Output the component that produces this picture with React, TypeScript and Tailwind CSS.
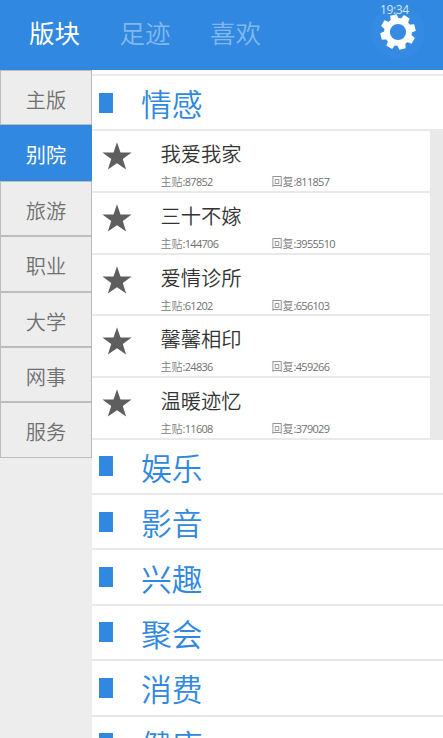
import { useState } from "react";
import clsx from "clsx";

const TABS = ["版块", "足迹", "喜欢"];

const CATEGORIES = ["主版", "别院", "旅游", "职业", "大学", "网事", "服务"];

const BOARDS = [
  { name: "我爱我家", posts: 87852, replies: 811857 },
  { name: "三十不嫁", posts: 144706, replies: 3955510 },
  { name: "爱情诊所", posts: 61202, replies: 656103 },
  { name: "馨馨相印", posts: 24836, replies: 459266 },
  { name: "温暖迹忆", posts: 11608, replies: 379029 },
];

const SECTIONS = ["情感", "娱乐", "影音", "兴趣", "聚会", "消费", "健康"];

const TEETH = [-15, 30, 75, 120, 165, 210, 255, 300];

function GearIcon() {
  return (
    <svg viewBox="-18 -18 36 36" className="w-9 h-9">
      <circle r="11" fill="none" stroke="white" strokeWidth="5.8" />
      {TEETH.map((angle) => (
        <path key={angle} d="M-4.2 -12 L-3.3 -17.6 H3.3 L4.2 -12 Z" fill="white" transform={`rotate(${angle})`} />
      ))}
    </svg>
  );
}

function StarIcon() {
  return (
    <svg viewBox="0 0 30 28" className="w-[30px] h-7 mt-px shrink-0">
      <path
        d="M15 0.3 L18.5 10.6 H29.6 L20.8 17 L24.1 27.5 L15 21.2 L5.9 27.5 L9.2 17 L0.4 10.6 H11.5 Z"
        fill="#5e5e5e"
      />
    </svg>
  );
}

function Count({ label, value, className }: { label: string; value: number; className?: string }) {
  return (
    <span className={clsx("text-[#808080]", className)}>
      {label}
      <span className="font-normal tracking-[-0.7px] text-[#707070]">:{value}</span>
    </span>
  );
}

function BoardRow({ name, posts, replies }: { name: string; posts: number; replies: number }) {
  return (
    <div className="flex h-[61.7px] border-b-2 border-[#e9e9e9] pl-[10px] pt-[10px]">
      <StarIcon />
      <div className="ml-[28.5px]">
        <div className="text-[20.3px] leading-[26px] text-[#333]">{name}</div>
        <div className="flex mt-[7px] text-[11px] leading-[16px]">
          <Count label="主贴" value={posts} className="w-[111px]" />
          <Count label="回复" value={replies} />
        </div>
      </div>
    </div>
  );
}

function SectionHeader({ title, onClick }: { title: string; onClick: () => void }) {
  return (
    <button onClick={onClick} className="flex items-center w-full h-[55.35px] border-b-2 border-[#e9e9e9] pl-[7px] text-left">
      <span className="w-[14px] h-5 bg-[#3088e0]" />
      <span className="ml-[28px] pt-[3px] text-[30.8px] leading-[40px] text-[#3088e0]">{title}</span>
    </button>
  );
}

export default function App() {
  const [tab, setTab] = useState("版块");
  const [category, setCategory] = useState("别院");
  const [open, setOpen] = useState("情感");

  return (
    <div className="flex flex-col w-[443px] h-[738px] overflow-hidden bg-white font-[350] font-['Open_Sans','Noto_Sans_CJK_SC',sans-serif]">
      <header className="relative flex h-[70px] shrink-0 bg-[#3088e0] pl-[29px] pt-[15px]">
        {TABS.map((t) => (
          <button
            key={t}
            onClick={() => setTab(t)}
            className={clsx(
              "w-[90.5px] h-9 text-left text-[25.5px] leading-[36px]",
              t === tab ? "text-white font-normal" : "text-[#83b8ed]",
            )}
          >
            {t}
          </button>
        ))}
        <button className="absolute left-[371px] top-[5px] flex items-center justify-center w-[54px] h-[54px] rounded-full bg-[#348be1]">
          <GearIcon />
        </button>
        <span className="absolute left-[380px] top-[3px] text-[12px] leading-[14px] font-normal tracking-[-0.4px] text-[#d3e6fa]">
          19:34
        </span>
      </header>

      <div className="flex flex-1 min-h-0">
        <nav className="w-[92px] shrink-0 bg-[#ededed]">
          {CATEGORIES.map((c) => (
            <button
              key={c}
              onClick={() => setCategory(c)}
              className={clsx(
                "block w-full h-[55.4px] border text-[20.2px] leading-[54px] pt-[2px]",
                c === category
                  ? "border-[#3088e0] bg-[#3088e0] text-white font-normal"
                  : "border-[#bcbcbc] text-[#707070]",
              )}
            >
              {c}
            </button>
          ))}
        </nav>

        <main className="flex-1 overflow-hidden pt-[4px]">
          <div className="border-t-2 border-[#eaeaea]">
            {SECTIONS.map((s) => (
              <div key={s}>
                <SectionHeader title={s} onClick={() => setOpen(s)} />
                {s === open && (
                  <div className="bg-[#e9e9e9] pr-[13px]">
                    <div className="bg-white">
                      {BOARDS.map((b) => (
                        <BoardRow key={b.name} {...b} />
                      ))}
                    </div>
                  </div>
                )}
              </div>
            ))}
          </div>
        </main>
      </div>
    </div>
  );
}
